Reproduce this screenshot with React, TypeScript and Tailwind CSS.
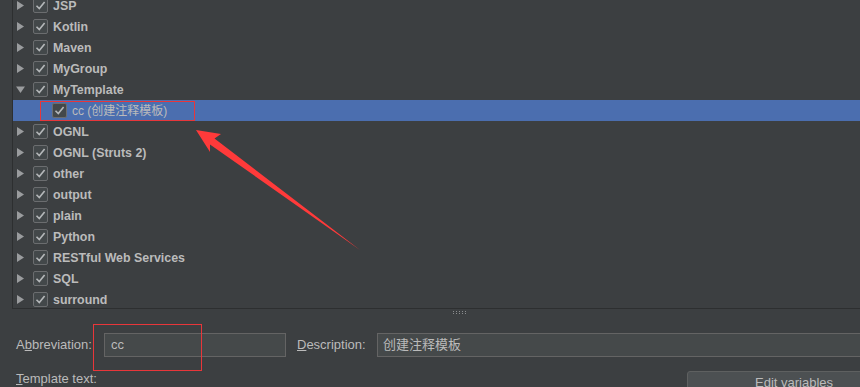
import React from 'react';

const font = { fontFamily: '"Liberation Sans", Arial, "Noto Sans CJK SC", sans-serif' };

type Row = { label: string; depth: number; expanded?: boolean; leaf?: boolean; selected?: boolean };

const rows: Row[] = [
  { label: 'JSP', depth: 0 },
  { label: 'Kotlin', depth: 0 },
  { label: 'Maven', depth: 0 },
  { label: 'MyGroup', depth: 0 },
  { label: 'MyTemplate', depth: 0, expanded: true },
  { label: 'cc (创建注释模板)', depth: 1, leaf: true, selected: true },
  { label: 'OGNL', depth: 0 },
  { label: 'OGNL (Struts 2)', depth: 0 },
  { label: 'other', depth: 0 },
  { label: 'output', depth: 0 },
  { label: 'plain', depth: 0 },
  { label: 'Python', depth: 0 },
  { label: 'RESTful Web Services', depth: 0 },
  { label: 'SQL', depth: 0 },
  { label: 'surround', depth: 0 },
];

function Toggle({ expanded }: { expanded?: boolean }) {
  return (
    <svg width="9" height="9" viewBox="0 0 9 9" className="shrink-0">
      {expanded ? <path d="M0 1.5 H9 L4.5 8 Z" fill="#9a9c9e" /> : <path d="M1 0 L8 4.5 L1 9 Z" fill="#9a9c9e" />}
    </svg>
  );
}

function Check() {
  return (
    <div className="w-[15px] h-[15px] shrink-0 border border-[#6b6d6f] bg-[#43484a] rounded-[2px] flex items-center justify-center">
      <svg width="11" height="11" viewBox="0 0 11 11">
        <path d="M1.5 5.8 L4.3 8.6 L9.6 2" fill="none" stroke="#b5b8ba" strokeWidth="1.6" />
      </svg>
    </div>
  );
}

function TreeRow({ row }: { row: Row }) {
  return (
    <div className={`h-[21px] flex items-center ${row.selected ? 'bg-[#4b6eaf]' : ''}`}>
      {row.depth === 0 ? (
        <div className="flex items-center pl-[3px]">
          <div className="w-[17px] flex items-center">
            <Toggle expanded={row.expanded} />
          </div>
          <Check />
          <span className="ml-[5px] mt-[2px] text-[12.4px] font-bold text-[#bbbbbb] whitespace-nowrap">{row.label}</span>
        </div>
      ) : (
        <div className="flex items-center pl-[39px]">
          <Check />
          <span className="ml-[5px] mt-[1px] text-[12px] text-[#bbbbbb] whitespace-nowrap">{row.label}</span>
        </div>
      )}
    </div>
  );
}

export default function App() {
  return (
    <div className="w-[860px] h-[387px] bg-[#3c3f41] overflow-hidden relative" style={font}>
      <div className="ml-[12px] h-[309px] border-l border-b border-[#2d2f30] overflow-hidden">
        <div className="-mt-[5px]">
          {rows.map((r) => (
            <TreeRow key={r.label} row={r} />
          ))}
        </div>
      </div>

      <div className="h-[6px] flex items-start pl-[453px] pt-[2px]">
        <div className="grid grid-cols-5 gap-x-[2px] gap-y-[1px]">
          {Array.from({ length: 10 }).map((_, i) => (
            <div key={i} className="w-[1px] h-[1px] bg-[#8a8c8e]" />
          ))}
        </div>
      </div>

      <div className="mt-[18px] flex items-center h-[24px] text-[13px] text-[#bbbbbb]">
        <span className="pl-[16px] w-[104px] shrink-0">
          A<span className="underline">b</span>breviation:
        </span>
        <div className="w-[182px] shrink-0 h-[24px] bg-[#45494a] border border-[#646464] flex items-center px-[6px]">cc</div>
        <span className="ml-[11px] w-[80px] shrink-0">
          <span className="underline">D</span>escription:
        </span>
        <div className="w-[520px] shrink-0 h-[24px] bg-[#45494a] border border-[#646464] flex items-center px-[5px]">创建注释模板</div>
      </div>

      <div className="mt-[14px] flex items-start text-[13px] text-[#bbbbbb]">
        <span className="pl-[16px] pt-[1px] w-[687px] shrink-0 leading-[14px]">
          <span className="underline">T</span>emplate text:
        </span>
        <div className="w-[200px] shrink-0 h-[30px] bg-[#4c5052] border border-[#5e6060] rounded-[3px] pl-[67px] pt-[3px] leading-[16px] whitespace-nowrap">
          Edit variables
        </div>
      </div>

      {/* annotations */}
      <div className="absolute left-[40px] top-[101px] w-[155px] h-[20px] border-[1.5px] border-[#e8363a]" />
      <div className="absolute left-[93px] top-[324px] w-[109px] h-[47px] border-[1.5px] border-[#e8363a]" />
      <svg className="absolute left-0 top-0" width="860" height="387">
        <path d="M196 130 L221 134 L214.5 138.5 L360 250 L210 144.5 L210 152 Z" fill="#ff3a3a" />
      </svg>
    </div>
  );
}
